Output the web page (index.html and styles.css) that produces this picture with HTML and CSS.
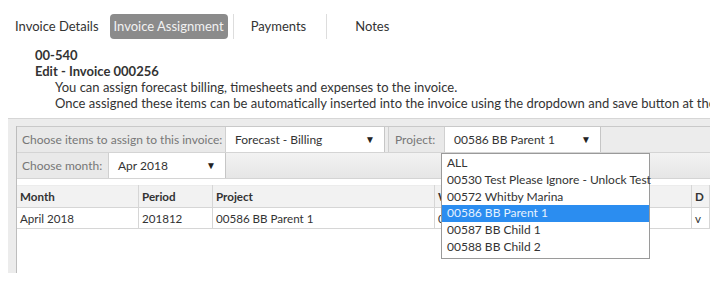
FILE: index.html
```html
<!DOCTYPE html>
<html lang="en">
<head>
    <meta charset="UTF-8">
    <title>Invoice Assignment</title>
    <link rel="stylesheet" href="styles.css">
</head>
<body>

    <div class="tabs">
        <span class="tab">Invoice Details</span>
        <span class="tab active">Invoice Assignment</span>
        <span class="tab sep">Payments</span>
        <span class="tab sep">Notes</span>
    </div>

    <div class="heading">
        <div class="code">00-540</div>
        <div class="title">Edit - Invoice 000256</div>
        <p>You can assign forecast billing, timesheets and expenses to the invoice.<br>
        Once assigned these items can be automatically inserted into the invoice using the dropdown and save button at the bottom.</p>
    </div>

    <div class="panel">
        <div class="frame">
            <div class="toolbar">
                <span class="label items-label">Choose items to assign to this invoice:</span>
                <span class="select items">Forecast - Billing <i>&#9660;</i></span>
                <span class="label project">Project:</span>
                <span class="select proj">00586 BB Parent 1 <i>&#9660;</i>
                    <!-- open project dropdown -->
                    <ul class="menu">
                        <li>ALL</li>
                        <li>00530 Test Please Ignore - Unlock Test</li>
                        <li>00572 Whitby Marina</li>
                        <li class="selected">00586 BB Parent 1</li>
                        <li>00587 BB Child 1</li>
                        <li>00588 BB Child 2</li>
                    </ul>
                </span>
                <span class="rest"></span>
            </div>
            <div class="toolbar second">
                <span class="label month-label">Choose month:</span>
                <span class="select month">Apr 2018 <i>&#9660;</i></span>
                <span class="rest"></span>
            </div>

            <table class="grid">
                <thead>
                    <tr>
                        <th class="c-month">Month</th>
                        <th class="c-period">Period</th>
                        <th class="c-project">Project</th>
                        <th class="c-w">W</th>
                        <th class="c-d">D</th>
                    </tr>
                </thead>
                <tbody>
                    <tr>
                        <td>April 2018</td>
                        <td>201812</td>
                        <td>00586 BB Parent 1</td>
                        <td>0</td>
                        <td>v</td>
                    </tr>
                </tbody>
            </table>
        </div>
    </div>

</body>
</html>
```

FILE: styles.css
```css
body {
    margin: 0;
    font-family: 'Lato', 'Open Sans', sans-serif;
    font-size: 13px;
    color: #333;
    background-color: #fff;
    overflow: hidden;
}

/* Tabs */
.tabs {
    display: flex;
    align-items: center;
    padding: 14px 0 0 15px;
    height: 25px;
}

.tab {
    height: 25px;
    line-height: 25px;
}

.tab.active {
    background-color: #8b8b8b;
    color: #f2f2f2;
    border-radius: 4px;
    padding: 0 4px;
    margin-left: 11px;
    margin-right: 5px;
}

.tab.sep {
    border-left: 1px solid #ddd;
    padding: 0 20px 0 17px;
}

.tab.sep:last-child {
    padding-left: 28px;
}

/* Heading */
.heading {
    padding-left: 35px;
    margin-top: 8px;
    line-height: 16px;
    white-space: nowrap;
    overflow: hidden;
}

.code,
.title {
    font-weight: bold;
}

.heading p {
    margin: 0;
    padding-left: 20px;
}

/* Assignment panel */
.panel {
    margin: 7px 0 0 8px;
    background-color: #ececec;
    border-top: 1px solid #d6d6d6;
    padding: 7px 0 0 8px;
    height: 147px;
}

.frame {
    border-left: 1px solid #bdbdbd;
    background-color: #fff;
    height: 147px;
}

.toolbar {
    display: flex;
    height: 25px;
    font-size: 12px;
    border-top: 1px solid #c9c9c9;
    border-bottom: 1px solid #d4d4d4;
    background-color: #ececec;
}

.toolbar.second {
    border-top: none;
    background: linear-gradient(#f2f2f2, #e6e6e6);
}

.label {
    line-height: 25px;
    padding: 0 5px;
    color: #777;
    background-color: #e9e9e9;
    white-space: nowrap;
    box-sizing: border-box;
}

.items-label {
    width: 208px;
}

.month-label {
    width: 91px;
}

.label.project {
    width: 56px;
    margin-left: 3px;
    border-left: 1px solid #cfcfcf;
    padding: 0 6px;
}

.select {
    position: relative;
    line-height: 25px;
    padding: 0 9px;
    background-color: #fff;
    border-left: 1px solid #d0d0d0;
    border-right: 1px solid #c6c6c6;
    display: flex;
    justify-content: space-between;
    box-sizing: border-box;
    white-space: nowrap;
}

.select i {
    font-style: normal;
    font-size: 10px;
    color: #222;
}

.select.items {
    width: 160px;
}

.select.proj {
    width: 157px;
}

.select.month {
    width: 118px;
}

.rest {
    flex: 1;
}

/* Dropdown list */
.menu {
    position: absolute;
    top: 26px;
    left: -4px;
    width: 209px;
    box-sizing: border-box;
    margin: 0;
    padding: 1px 0 2px;
    list-style: none;
    background-color: #fff;
    border: 1px solid #9a9a9a;
    z-index: 2;
}

.menu li {
    height: 16.8px;
    line-height: 16.8px;
    padding: 0 5px;
    color: #333;
}

.menu li.selected {
    background-color: #2b8df0;
    color: #e6f2ff;
}

/* Grid */
.grid {
    margin-top: 6px;
    width: 100%;
    font-size: 11.6px;
    border-collapse: collapse;
    table-layout: fixed;
    border-top: 1px solid #ececec;
}

.grid th,
.grid td {
    text-align: left;
    padding: 0 3px;
    border-right: 1px solid #d6d6d6;
    border-bottom: 1px solid #d6d6d6;
    white-space: nowrap;
    overflow: hidden;
}

.grid th {
    height: 21px;
    background-color: #f2f2f2;
    font-weight: bold;
}

.grid td {
    height: 20px;
}

.c-month { width: 115px; }
.c-period { width: 67px; }
.c-project { width: 215px; }
.c-w { width: 250px; }
```
